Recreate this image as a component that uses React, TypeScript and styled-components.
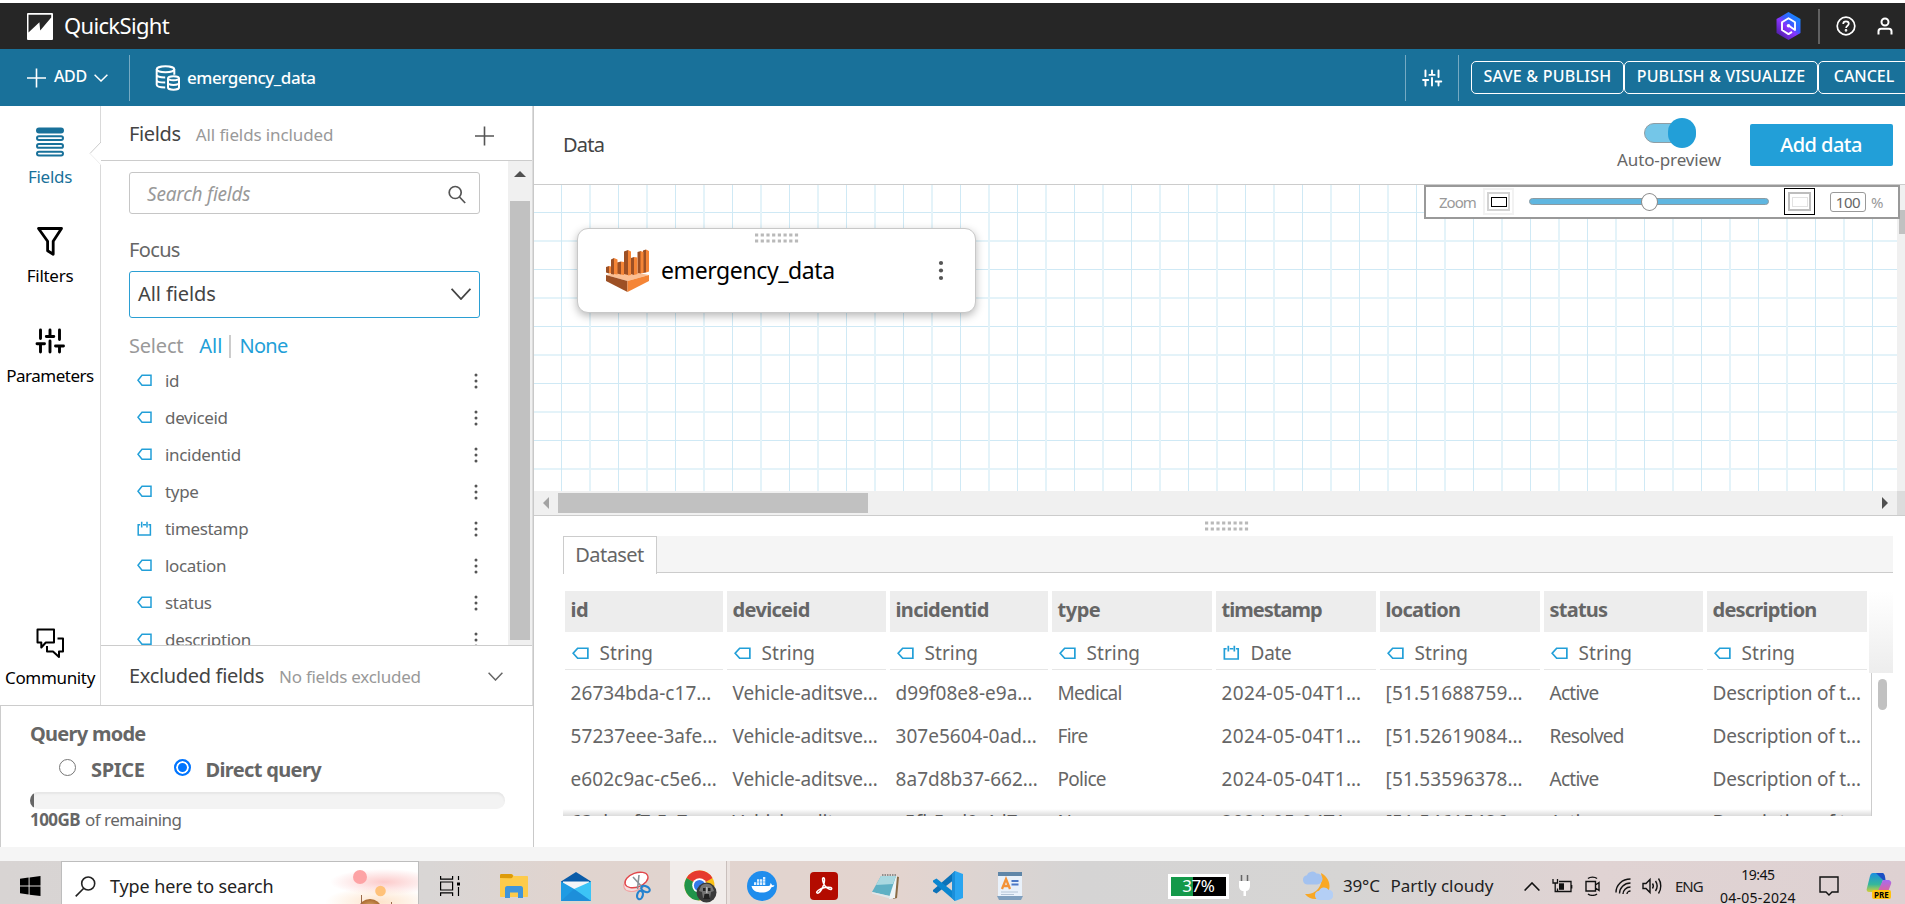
import React from 'react';
import styled, { createGlobalStyle, css } from 'styled-components';

const GlobalStyle = createGlobalStyle`
  *, *::before, *::after { box-sizing: border-box; }
  body { margin: 0; background: #fff; font-family: "Noto Sans", "Open Sans", sans-serif; }
  svg { display: block; flex: none; }
`;

const Text = styled.span<{ $size?: number; $weight?: number; $ls?: number; $color?: string; $italic?: boolean; $lh?: number }>`
  font-size: ${p => p.$size ?? 17}px;
  font-weight: ${p => p.$weight ?? 400};
  letter-spacing: ${p => p.$ls ?? 0}px;
  color: ${p => p.$color ?? '#666'};
  font-style: ${p => (p.$italic ? 'italic' : 'normal')};
  line-height: ${p => p.$lh ?? 24}px;
  white-space: nowrap;
`;

const Page = styled.div`
  display: flex;
  flex-direction: column;
  width: 1905px;
  height: 904px;
  overflow: hidden;
  background: #fff;
`;

/* ---------- top bars ---------- */

const Header = styled.header`
  display: flex;
  align-items: center;
  flex: none;
  height: 49px;
  padding: 0 12px 0 27px;
  border-top: 3px solid #fff;
  background: #262626;
`;
const Brand = styled.div`
  display: flex;
  align-items: center;
  gap: 11px;
  flex: 1;
`;
const BrandName = styled(Text)`
  margin-top: -2px;
`;
const HeaderRule = styled.div`
  width: 2px;
  height: 35px;
  margin: 0 16px 0 17px;
  background: #616161;
`;
const UserSlot = styled.div`
  margin-left: 21px;
`;

const Toolbar = styled.div`
  display: flex;
  align-items: center;
  flex: none;
  height: 57px;
  padding-left: 27px;
  background: #19719a;
`;
const AddMenu = styled.div`
  display: flex;
  align-items: center;
  width: 102px;
`;
const AddLabel = styled(Text)`
  margin: -3px 7px 0 7px;
`;
const ToolbarRule = styled.div`
  flex: none;
  width: 1px;
  height: 46px;
  background: #75aac3;
`;
const DatasetName = styled.div`
  display: flex;
  align-items: center;
  gap: 6px;
  flex: 1;
  padding-left: 25px;
`;
const SlidersSlot = styled.div`
  display: flex;
  justify-content: center;
  width: 52px;
`;
const Actions = styled.div`
  display: flex;
  width: 446px;
  padding-left: 12px;
  overflow: hidden;
`;
const ActionButton = styled.button<{ $width: number }>`
  display: flex;
  justify-content: center;
  flex: none;
  width: ${p => p.$width}px;
  height: 33px;
  padding: 2px 0 0 0;
  border: 1px solid #fff;
  border-radius: 5px;
  background: transparent;
  font-family: inherit;
`;

/* ---------- left side ---------- */

const Main = styled.main`
  display: flex;
  flex: none;
  height: 741px;
`;
const LeftSide = styled.aside`
  display: flex;
  flex-direction: column;
  width: 534px;
  border-right: 1px solid #c9c9c9;
`;
const Explorer = styled.div`
  display: flex;
  height: 599px;
`;
const Rail = styled.nav`
  position: relative;
  display: flex;
  flex-direction: column;
  width: 101px;
  border-right: 1px solid #d9d9d9;
`;
const RailItem = styled.div<{ $last?: boolean }>`
  display: flex;
  flex-direction: column;
  align-items: center;
  gap: 7px;
  height: ${p => (p.$last ? 98 : 99.4)}px;
  padding: 20px 0 0 0;
  ${p => p.$last && css`margin-top: auto;`}
`;
const Notch = styled.svg`
  position: absolute;
  left: 89px;
  top: 35px;
`;

const FieldsPanel = styled.section`
  display: flex;
  flex-direction: column;
  width: 432px;
  border-right: 1px solid #dcdcdc;
`;
const PanelHeader = styled.div`
  display: flex;
  align-items: center;
  height: 55px;
  padding: 2px 37px 0 28px;
  border-bottom: 1px solid #ccc;
`;
const PanelAction = styled.div`
  margin-top: 4px;
`;
const TitleGroup = styled.div`
  display: flex;
  align-items: baseline;
  gap: 15px;
  flex: 1;
`;
const ListArea = styled.div`
  display: flex;
  height: 484px;
  overflow: hidden;
`;
const ListContent = styled.div`
  flex: 1;
  height: 484px;
  padding: 11px 28px 0 28px;
`;
const SearchBox = styled.div`
  display: flex;
  align-items: center;
  justify-content: space-between;
  height: 42px;
  padding: 2px 13px 0 17px;
  border: 1px solid #c6c6c6;
  border-radius: 3px;
`;
const FocusLabel = styled.div`
  height: 57px;
  padding: 24px 0 0 0;
`;
const SelectBox = styled.div`
  display: flex;
  align-items: center;
  justify-content: space-between;
  height: 47px;
  padding: 0 8px 1px 8px;
  border: 1px solid #2b9fd3;
  border-radius: 3px;
`;
const SelectRow = styled.div`
  display: flex;
  align-items: center;
  height: 44px;
  padding: 12px 0 0 0;
`;
const SelectLink = styled(Text)<{ $ml?: number }>`
  margin-left: ${p => p.$ml ?? 0}px;
`;
const SelectRule = styled.span`
  width: 2px;
  height: 23px;
  margin: 0 8px 0 7px;
  background: #ccc;
`;
const FieldRow = styled.div`
  display: flex;
  align-items: center;
  height: 37px;
  padding: 0 1px 0 8px;
`;
const FieldName = styled(Text)`
  flex: 1;
  padding-left: 13px;
`;
const Scrollbar = styled.div`
  display: flex;
  flex-direction: column;
  align-items: center;
  width: 24px;
  height: 484px;
  padding-top: 10px;
  background: #f0f0f0;
`;
const ScrollThumb = styled.div`
  width: 20px;
  height: 439px;
  margin-top: 24px;
  background: #c1c1c1;
`;
const ExcludedBar = styled.div`
  display: flex;
  align-items: center;
  height: 60px;
  padding: 2px 29px 0 28px;
  border-top: 1px solid #ccc;
`;

const QueryPanel = styled.section`
  display: flex;
  flex-direction: column;
  align-items: flex-start;
  flex: 1;
  padding: 15px 28px 0 28px;
  border-top: 1px solid #ccc;
  border-left: 1px solid #ccc;
`;
const QueryTitle = styled(Text)`
  padding-left: 1px;
`;
const RadioRow = styled.div`
  display: flex;
  align-items: center;
  height: 36px;
  padding: 10px 0 0 30px;
`;
const Radio = styled.span<{ $on?: boolean }>`
  display: block;
  width: 17px;
  height: 17px;
  margin-top: -5px;
  border: ${p => (p.$on ? '2px solid #0075ff' : '1px solid #767676')};
  border-radius: 50%;
  background: ${p => (p.$on ? '#0075ff' : '#fff')};
  box-shadow: ${p => (p.$on ? 'inset 0 0 0 2px #fff' : 'none')};
`;
const RadioLabel = styled(Text)`
  margin: 0 29px 0 15px;
`;
const Meter = styled.div`
  width: 475px;
  height: 17px;
  margin: 9px 0 0 1px;
  overflow: hidden;
  border-radius: 9px;
  background: #f3f3f3;
  box-shadow: inset 0 2px 2px #e6e6e6;
`;
const MeterFill = styled.div`
  width: 4px;
  height: 17px;
  background: #666;
`;
const Capacity = styled.div`
  display: flex;
  gap: 5px;
  padding-left: 1px;
`;

/* ---------- data pane ---------- */

const DataPane = styled.section`
  display: flex;
  flex-direction: column;
  flex: 1;
  min-width: 0;
`;
const DataHeader = styled.div`
  display: flex;
  align-items: center;
  flex: none;
  height: 79px;
  padding: 0 12px 0 29px;
  border-bottom: 1px solid #ccc;
`;
const DataTitle = styled(Text)`
  flex: 1;
`;
const PreviewToggle = styled.div`
  display: flex;
  flex-direction: column;
  align-items: center;
  width: 104px;
  height: 78px;
  padding-top: 12px;
`;
const ToggleTrack = styled.div`
  display: flex;
  align-items: center;
  justify-content: flex-end;
  width: 52px;
  height: 20px;
  margin: 5px 0 5px 1px;
  border: 1px solid #8f9da4;
  border-radius: 10px;
  background: #74c6e8;
`;
const ToggleKnob = styled.div`
  flex: none;
  width: 28px;
  height: 30px;
  margin-right: -1px;
  border-radius: 14px;
  background: #229fd8;
`;
const AddData = styled.button`
  display: flex;
  align-items: center;
  justify-content: center;
  width: 143px;
  height: 42px;
  margin-left: 29px;
  padding: 0 1px 0 0;
  border: 0;
  border-radius: 2px;
  background: #229fd8;
  font-family: inherit;
`;

const CanvasRow = styled.div`
  display: flex;
  flex: none;
  height: 306px;
`;
const Canvas = styled.div`
  position: relative;
  flex: 1;
  background-color: #fff;
  background-image:
    linear-gradient(to right, #cfe9f5 1px, transparent 1px, transparent 28px, #e4f3f9 28px, #e4f3f9 30px, transparent 30px),
    linear-gradient(to bottom, #cfe9f5 1px, transparent 1px, transparent 28px, #e4f3f9 28px, #e4f3f9 30px, transparent 30px);
  background-size: 57px 57px;
  background-position: 27px 27px;
`;
const CanvasScroll = styled.div`
  width: 8px;
  padding: 25px 0 0 2px;
  background: #f0f0f0;
`;
const CanvasThumb = styled.div`
  height: 24px;
  background: #c1c1c1;
`;
const NodeCard = styled.div`
  position: absolute;
  left: 43px;
  top: 43px;
  display: flex;
  align-items: center;
  width: 399px;
  height: 85px;
  padding: 0 31px 0 28px;
  border: 1px solid #c8c8c8;
  border-radius: 11px;
  background: #fff;
  box-shadow: 0 3px 8px rgba(0, 0, 0, 0.28);
`;
const NodeGrip = styled.div`
  position: absolute;
  left: 177px;
  top: 4px;
`;
const NodeName = styled(Text)`
  flex: 1;
  margin-top: -2px;
  padding-left: 12px;
`;
const ZoomBar = styled.div`
  position: absolute;
  left: 890px;
  top: 0;
  z-index: 1;
  display: flex;
  align-items: center;
  width: 476px;
  height: 34px;
  padding: 0 13px 1px 13px;
  border: 2px solid #999;
  background: #fff;
`;
const ZoomLabel = styled(Text)`
  width: 44px;
`;
const ZoomPreset = styled.div<{ $outer?: boolean }>`
  display: flex;
  align-items: center;
  justify-content: center;
  flex: none;
  width: 31px;
  height: 27px;
  border: ${p => (p.$outer ? '1px solid #000' : '2px solid #f2f2f2')};
`;
const ZoomFrame = styled.div<{ $outer?: boolean }>`
  display: flex;
  align-items: center;
  justify-content: center;
  width: 23px;
  height: 19px;
  border: 2px solid ${p => (p.$outer ? '#bdbdbd' : '#d3d3d3')};
`;
const ZoomCore = styled.div<{ $outer?: boolean }>`
  width: 16px;
  height: 10px;
  border: ${p => (p.$outer ? '1px solid #e2e2e2' : '1.5px solid #000')};
`;
const ZoomTrack = styled.div`
  display: flex;
  align-items: center;
  justify-content: center;
  flex: none;
  width: 240px;
  height: 7px;
  margin: 0 15px;
  border: 1px solid #8a9ba3;
  border-radius: 4px;
  background: #5fb6e0;
`;
const ZoomThumb = styled.div`
  flex: none;
  width: 17px;
  height: 18px;
  border: 1px solid #888;
  border-radius: 50%;
  background: #fff;
`;
const ZoomInput = styled.div`
  display: flex;
  align-items: center;
  justify-content: center;
  flex: none;
  width: 36px;
  height: 20px;
  margin: 0 5px 0 15px;
  border: 1px solid #999;
  border-radius: 3px;
`;
const HScroll = styled.div`
  display: flex;
  align-items: center;
  flex: none;
  height: 24px;
  padding-left: 9px;
  background: #f0f0f0;
`;
const HThumb = styled.div`
  width: 310px;
  height: 20px;
  margin-left: 9px;
  background: #c1c1c1;
`;
const HEnd = styled.div`
  display: flex;
  flex: 1;
  justify-content: flex-end;
  padding-right: 9px;
`;
const HCorner = styled.div`
  width: 8px;
  height: 24px;
  background: #dcdcdc;
`;
const Splitter = styled.div`
  display: flex;
  flex: none;
  height: 21px;
  padding: 5px 0 0 671px;
  border-top: 1px solid #ccc;
`;
const Tabs = styled.div`
  display: flex;
  flex: none;
  height: 37px;
  margin: 0 12px 0 29px;
  border-bottom: 1px solid #ccc;
  background: #f5f5f5;
`;
const Tab = styled.div`
  display: flex;
  justify-content: center;
  width: 94px;
  height: 38px;
  padding: 6px 1px 0 0;
  border: 1px solid #ccc;
  border-bottom: 0;
  background: #fff;
`;
const TableWrap = styled.div`
  display: flex;
  height: 225px;
  margin: 18px 12px 0 29px;
`;
const Table = styled.div`
  width: 1308px;
  height: 225px;
  overflow: hidden;
  position: relative;
`;
const GridRow = styled.div`
  display: grid;
  grid-template-columns: 158px 159px 158px 160px 160px 160px 159px 160px;
  column-gap: 4px;
  padding-left: 2px;
`;
const HeadCell = styled.div`
  height: 41px;
  padding: 7px 0 0 5.6px;
  background: #ededed;
`;
const TypeCell = styled.div`
  display: flex;
  align-items: center;
  gap: 10.600px;
  height: 38px;
  padding: 5px 0 0 7px;
  border-bottom: 1px solid #e6e6e6;
`;
const BodyCell = styled.div`
  height: 43px;
  padding: 11px 0 0 5.6px;
  overflow: hidden;
  line-height: 24px;
`;
const Body = styled.div`
  height: 146px;
`;
const BottomShade = styled.div`
  position: absolute;
  left: 0;
  bottom: 0;
  width: 1308px;
  height: 7px;
  background: linear-gradient(rgba(0, 0, 0, 0), rgba(0, 0, 0, 0.14));
`;
const TableSide = styled.div`
  display: flex;
  flex-direction: column;
  width: 24px;
  margin-left: -2px;
`;
const SideShade = styled.div`
  height: 82px;
  background: linear-gradient(#fff, #ededed);
`;
const SideScroll = styled.div`
  flex: 1;
  margin-left: 2px;
  padding: 6px 0 0 6px;
  border-left: 1px solid #ccc;
`;
const SideThumb = styled.div`
  width: 9px;
  height: 31px;
  border-radius: 5px;
  background: #c1c1c1;
`;

/* ---------- desktop taskbar ---------- */

const Gap = styled.div`
  flex: none;
  height: 14px;
  background: #f5f5f5;
`;
const Taskbar = styled.footer`
  display: flex;
  align-items: center;
  flex: none;
  height: 50px;
  background: linear-gradient(90deg, #d8d4d3 0, #d9d6d5 430px, #e0d4cf 560px, #e3d4cf 900px, #d5d4d4 1080px, #d6d5d4 1350px, #e0d3d3 1600px, #ded1d2 1905px);
`;
const StartSlot = styled.div`
  display: flex;
  justify-content: center;
  width: 61px;
`;
const SearchField = styled.div`
  display: flex;
  align-items: center;
  width: 358px;
  height: 50px;
  padding-left: 13px;
  border: 1px solid #bdbdbd;
  border-bottom: 0;
  background: #fff;
  overflow: hidden;
`;
const SearchText = styled(Text)`
  flex: 1;
  margin-top: -2px;
  padding-left: 14px;
`;
const AppSlot = styled.div<{ $active?: boolean; $shift?: number }>`
  display: flex;
  align-items: center;
  justify-content: center;
  width: 62.2px;
  height: 50px;
  padding-left: ${p => p.$shift ?? 1}px;
  ${p => p.$active && css`
    background: linear-gradient(90deg, transparent 2px, #f1ecea 2px, #f1ecea 58px, #c9bfbc 58px, #c9bfbc 59px, #ebe3e0 59px);
  `}
`;
const Tray = styled.div<{ $ml: number; $w: number }>`
  display: flex;
  flex-direction: column;
  align-items: center;
  flex: none;
  width: ${p => p.$w}px;
  margin-left: ${p => p.$ml}px;
`;
const Battery = styled.div`
  display: flex;
  align-items: center;
  justify-content: center;
  width: 61px;
  height: 25px;
  border: 3px solid #fff;
  background: linear-gradient(90deg, #14994a 22px, #000 22px);
`;

/* ---------- icons ---------- */

const Chevron = ({ w, h, color, stroke = 1.5 }: { w: number; h: number; color: string; stroke?: number }) => (
  <svg width={w} height={h} viewBox={`0 0 ${w} ${h}`} fill="none" stroke={color} strokeWidth={stroke}>
    <path d={`M.6 .8 L${w / 2} ${h - 1} L${w - 0.6} .8`} />
  </svg>
);
const Plus = ({ color }: { color: string }) => (
  <svg width="20" height="20" viewBox="0 0 20 20" stroke={color} strokeWidth="1.6"><path d="M9.500.5v19M0 10h19" /></svg>
);
const Sliders = ({ size, color, stroke }: { size: number; color: string; stroke: number }) => (
  <svg width={size} height={size} viewBox="0 0 32 32" fill="none" stroke={color} strokeWidth={stroke} strokeLinecap="round">
    <path d="M6.5 5v8.5M3 18.800h7.500M6.5 19v8M16 5v5M12.300 11.500h7.500M16 16v11M25.500 5v9.500M21.500 21h8M25.500 21v6" />
  </svg>
);
const FieldsIcon = () => (
  <svg width="30" height="32" viewBox="0 0 30 32" fill="none" stroke="#19719a" strokeWidth="2">
    <rect x="2" y="2.500" width="26" height="4" rx="2" fill="#19719a" />
    <rect x="2" y="10.200" width="26" height="3.800" rx="1.900" />
    <rect x="2" y="18" width="26" height="3.800" rx="1.900" />
    <rect x="2" y="25.700" width="26" height="3.800" rx="1.900" />
  </svg>
);
const FunnelIcon = () => (
  <svg width="28" height="32" viewBox="0 0 28 32" fill="none" stroke="#000" strokeWidth="2.800" strokeLinejoin="round">
    <path d="M2.500 3.500h23l-8.300 12.800v13l-5.600-3.500v-9.500z" />
  </svg>
);
const ChatIcon = () => (
  <svg width="30" height="32" viewBox="0 0 30 32" fill="none" stroke="#000" strokeWidth="2" strokeLinejoin="round">
    <path d="M2.500 2.500h16.500v13h-8.200l-4.500 5v-5h-3.800z" />
    <path d="M22.500 11.500h5.500v13h-4v5.500l-6-5.500h-6v-5.500" />
  </svg>
);
const TagIcon = ({ w = 15 }: { w?: number }) => (
  <svg width={w} height="13" viewBox="0 0 15 13" preserveAspectRatio="none" fill="none" stroke="#229fd8" strokeWidth="1.500">
    <path d="M1 6.300 5 1.300h9v10H5z" />
  </svg>
);
const DateIcon = ({ w = 15 }: { w?: number }) => (
  <svg width={w} height="16" viewBox="0 0 15 16" preserveAspectRatio="none" fill="none" stroke="#229fd8" strokeWidth="1.500">
    <path d="M3.200 3.800H1.200v10.200h12.200V3.800h-2M6 3.800h3M4.700.8v5.800M10 .8v5.800" />
  </svg>
);
const Kebab = ({ r = 1.5, gap = 6, color = '#555' }: { r?: number; gap?: number; color?: string }) => (
  <svg width="6" height={gap * 2 + 6} viewBox={`0 0 6 ${gap * 2 + 6}`} fill={color}>
    {[0, 1, 2].map(i => <circle key={i} cx="3" cy={3 + i * gap} r={r} />)}
  </svg>
);
const Grip = () => (
  <svg width="44" height="11" viewBox="0 0 44 11" fill="#b9b9b9">
    {Array.from({ length: 16 }, (_, i) => (
      <rect key={i} x={(i % 8) * 5.7} y={i < 8 ? 0.5 : 6.5} width="3.200" height="3" />
    ))}
  </svg>
);
const LogoIcon = () => (
  <svg width="26" height="27" viewBox="0 0 26 27">
    <rect width="26" height="27" rx="1" fill="#fff" />
    <path d="M1.500 1.800h22.700v2.800L13.200 17.500l-.8-8.200L1.500 19.500z" fill="#262626" />
  </svg>
);
const AssistantIcon = () => (
  <svg width="25" height="28" viewBox="0 0 25 28">
    <defs>
      <linearGradient id="hex" x1="1" y1="0" x2="0.200" y2="1">
        <stop offset="0" stopColor="#00a2ff" /><stop offset=".45" stopColor="#3a5bff" /><stop offset=".6" stopColor="#8a34ff" /><stop offset="1" stopColor="#4a1b9e" />
      </linearGradient>
    </defs>
    <path d="M12.500 0l12 7v14l-12 7-12-7V7z" fill="url(#hex)" />
    <path d="M12.500 13.500l6.500 4.500V10.300l-6.500-4.100-6.500 4.100v7.700l6.500 4.100 3.500-2.200" fill="none" stroke="#fff" strokeWidth="1.900" strokeLinejoin="round" />
    <circle cx="12.500" cy="13.700" r="1.800" fill="#fff" />
  </svg>
);
const HelpIcon = () => (
  <svg width="20" height="20" viewBox="0 0 20 20" fill="none" stroke="#fff" strokeWidth="1.700">
    <circle cx="10" cy="10" r="8.800" />
    <path d="M7.200 8c0-1.700 1.200-2.600 2.800-2.600s2.800.9 2.800 2.400c0 2-2.700 2-2.700 4.200" />
    <circle cx="10" cy="14.300" r=".5" fill="#fff" />
  </svg>
);
const UserIcon = () => (
  <svg width="16" height="18" viewBox="0 0 16 18" fill="none" stroke="#fff" strokeWidth="2">
    <circle cx="8" cy="5" r="3.500" />
    <path d="M1.500 17.500v-3.200c0-1.500 1-2.500 2.500-2.500h8c1.500 0 2.500 1 2.500 2.500v3.200" />
  </svg>
);
const DatabaseIcon = () => (
  <svg width="26" height="26" viewBox="0 0 26 26" fill="none" stroke="#fff" strokeWidth="2">
    <ellipse cx="10.500" cy="4.300" rx="8.800" ry="3" />
    <path d="M1.700 4.300v15.500c0 1.500 3 2.700 8.500 2.700M19.300 4.300v5.500M1.700 9.800c0 1.400 3 2.600 8.500 2.600M1.700 15c0 1.400 3 2.500 8.500 2.500" />
    <ellipse cx="18.500" cy="13.300" rx="5.500" ry="2" />
    <path d="M13 13.300v9.200c0 1.200 2.500 2.200 5.500 2.200s5.500-1 5.500-2.200v-9.200M13 17.800c0 1.200 2.500 2.100 5.500 2.100s5.500-.9 5.500-2.100" />
  </svg>
);
const SearchIcon = () => (
  <svg width="18" height="19" viewBox="0 0 18 19" fill="none" stroke="#555" strokeWidth="1.700">
    <circle cx="7.200" cy="7.500" r="6" /><path d="M11.500 12l5.700 6" />
  </svg>
);
const SourceIcon = () => (
  <svg width="43" height="43" viewBox="0 0 43 43">
    <path d="M0 26l21.500-4L43 26l-21.500 6z" fill="#fbbf93" />
    <path d="M0 26l21.500 6v11L0 32z" fill="#9d5025" />
    <path d="M43 26l-21.500 6v11L43 32z" fill="#f58536" />
    <path d="M0 18l3-1v7.500l-3-1zM5 10.500l3-1.500v16.500l-3-.5zM11 13.500l4-1v13l-4-1zM18 2.500l4-1.500v25l-4-1zM25 9l3-1v18l-3-1zM31.500 3l3.500-1v22.500l-3.500-.5zM37 1.500l3-1v23l-3 .5z" fill="#9d5025" />
    <path d="M3 17l2 .5v7H3zM8 9l3.500 1.500v15L8 25zM15 12.500l3 .5v13l-3-.5zM22 1l3 1.500v23.500l-3 .5zM28 8l3.500.5v16.500l-3.500 1zM34.500 2l3 1v21l-3 .5zM40 .5l3 1.500v20.500l-3 1z" fill="#f58536" />
  </svg>
);

const WindowsIcon = () => (
  <svg width="21" height="20" viewBox="0 0 21 20"><path d="M0 2.800l8.600-1.200v8H0zM9.600 1.400L20.500 0v9.500H9.600zM0 10.600h8.600v8L0 17.300zM9.600 10.600h10.900V20L9.600 18.700z" /></svg>
);
const TaskSearchIcon = () => (
  <svg width="21" height="21" viewBox="0 0 21 21" fill="none" stroke="#222" strokeWidth="1.600"><circle cx="13.200" cy="7.500" r="6.500" /><path d="M8.800 12.300L.7 20.400" /></svg>
);
const SearchArt = () => (
  <svg width="94" height="49" viewBox="0 0 94 49">
    <defs>
      <radialGradient id="glowA"><stop offset="0" stopColor="#fbb9b9" stopOpacity=".75" /><stop offset="1" stopColor="#fbb9b9" stopOpacity="0" /></radialGradient>
      <radialGradient id="glowB"><stop offset="0" stopColor="#fde0c4" stopOpacity=".9" /><stop offset="1" stopColor="#fde0c4" stopOpacity="0" /></radialGradient>
      <radialGradient id="nut"><stop offset="0" stopColor="#e8b877" /><stop offset="1" stopColor="#a9682f" /></radialGradient>
    </defs>
    <ellipse cx="60" cy="20" rx="54" ry="13" fill="url(#glowA)" />
    <ellipse cx="55" cy="40" rx="54" ry="15" fill="url(#glowB)" />
    <circle cx="36" cy="15" r="7" fill="#fda3a5" />
    <circle cx="56.500" cy="29" r="5.300" fill="#ffc27a" />
    <ellipse cx="46" cy="46" rx="11" ry="9" fill="url(#nut)" />
    <ellipse cx="60" cy="47" rx="7" ry="5" fill="#b3733a" />
    <path d="M37.500 33v12M67.500 40v8" stroke="#9b6a4a" />
  </svg>
);
const TaskViewIcon = () => (
  <svg width="21" height="20" viewBox="0 0 21 20" fill="none" stroke="#000" strokeWidth="1.200">
    <path d="M.6 0v3.200h12V0M.6 20v-3.200h12V20M.6 6h12v8H.6zM18.500 0v4M18.500 11v9" /><path d="M17 6.500h3v3h-3z" fill="#000" stroke="none" />
  </svg>
);
const FolderIcon = () => (
  <svg width="28" height="24" viewBox="0 0 28 24">
    <path d="M0 1.500C0 .7.500 0 1.500 0H12l2 2H27c.6 0 1 .5 1 1v19c0 .6-.4 1-1 1H1c-.6 0-1-.4-1-1z" fill="#fdcb4b" />
    <path d="M0 4V1.500C0 .7.500 0 1.500 0H11c1 0 2 1 2 2s-1 2.200-2 2.200z" fill="#dd9b0a" />
    <path d="M5 24V14.500c0-1.500.8-2.500 2.300-2.500h13.400c1.500 0 2.300 1 2.300 2.500V24h-5v-5.500h-8V24z" fill="#3f95db" />
  </svg>
);
const MailIcon = () => (
  <svg width="30" height="29" viewBox="0 0 30 29">
    <path d="M0 9.500L15 0l15 9.500v3H0z" fill="#0a5ba8" /><path d="M2 9.500h26v9H2z" fill="#f3f5f8" />
    <path d="M0 9.500l15 8.500 15-8.500V29H0z" fill="#1e9be3" /><path d="M30 9.500V29L13 16.900z" fill="#3cc4f6" />
    <path d="M0 29h30L13 17z" fill="#1c8ad6" opacity=".7" />
  </svg>
);
const SnipIcon = () => (
  <svg width="30" height="30" viewBox="0 0 30 30" fill="none">
    <ellipse cx="12" cy="13" rx="10.500" ry="7" transform="rotate(-20 12 13)" fill="#f4dede" stroke="#f1a3a3" strokeWidth="1.200" />
    <ellipse cx="14.500" cy="9" rx="12" ry="7" transform="rotate(-20 14.500 9)" fill="#fff" stroke="#e2474b" strokeWidth="1.300" />
    <path d="M11 6l10 11M17 4l-1.500 14" stroke="#8b9298" strokeWidth="1.600" />
    <ellipse cx="23.500" cy="18" rx="4.500" ry="2.800" transform="rotate(25 23.500 18)" stroke="#2583cf" strokeWidth="2.200" />
    <ellipse cx="18" cy="24" rx="2.800" ry="4.300" transform="rotate(15 18 24)" stroke="#2583cf" strokeWidth="2.200" />
  </svg>
);
const ChromeIcon = () => (
  <svg width="33" height="33" viewBox="0 0 33 33">
    <circle cx="15.500" cy="15.500" r="15" fill="#fbc116" />
    <path d="M15.500 15.500L2.500 8A15 15 0 0 1 28.500 8z" fill="#e63b2e" />
    <path d="M15.500 15.500L2.500 8a15 15 0 0 0 13 22.500z" fill="#20944a" />
    <circle cx="15.500" cy="15.500" r="7.300" fill="#fff" /><circle cx="15.500" cy="15.500" r="5.600" fill="#3379ea" />
    <circle cx="22.500" cy="22.500" r="10" fill="#3a3a3a" />
    <path d="M17 16c3-3 8-3 11 0l2 5-3 1-1 6h-7l-1-6-3-1z" fill="#757575" />
    <path d="M19 18h2.500v3H19zM24 18h2.500v3H24zM20.500 24h4.500l1 5h-6.500z" fill="#222" />
    <path d="M22 17h1.500v6H22z" fill="#b5b5b5" />
  </svg>
);
const DockerIcon = () => (
  <svg width="30" height="30" viewBox="0 0 30 30">
    <circle cx="15" cy="15" r="15" fill="#1f8ded" />
    <path d="M4.500 15h17c1.500 0 2-1 1.700-2.800 1.200.4 1.700 1.200 1.900 2 1-.1 1.700 0 2.400.4-.6 1.200-1.500 1.600-3 1.700-1.700 3.700-4.500 5.200-9.500 5.200-6 0-9.500-2-10.500-6.500z" fill="#fff" />
    <path d="M7 11.300h2.300v2.700H7zM10 11.300h2.300v2.700H10zM13 11.300h2.300v2.700H13zM16 11.300h2.300v2.700H16zM10 8.300h2.300v2.500H10zM13 8.300h2.300v2.500H13zM16 8.300h2.300v2.500H16zM16 6h2.300v2H16z" fill="#dcefff" />
  </svg>
);
const AcrobatIcon = () => (
  <svg width="28" height="28" viewBox="0 0 28 28">
    <rect width="28" height="28" rx="4" fill="#b30b00" />
    <path d="M13 6c2-1 2 4 0 8.500-1.500 4-4.500 7.500-6 6.500s2.500-4.500 8-5.500 7.500.5 6.500 1.700c-1 1-4.500-.7-6.500-3.200S12 6.500 13 6z" fill="none" stroke="#fff" strokeWidth="1.500" />
  </svg>
);
const NotepadIcon = () => (
  <svg width="28" height="27" viewBox="0 0 28 27">
    <path d="M22 3l5 1-2 21-4 1z" fill="#8a6b45" /><path d="M20 4l5-1-2 22-6 1z" fill="#eef4f6" />
    <path d="M9 3h15l-6.500 20L0 19z" fill="#5fb0c4" /><path d="M9 3h15l-3 8L4 12z" fill="#a9d8e0" /><path d="M0 19l17.500 4 .5 2.500L0 20.500z" fill="#dfe7ea" />
    <path d="M10 2h14" stroke="#777" strokeWidth="1.500" strokeDasharray="1.500 1" />
  </svg>
);
const VsCodeIcon = () => (
  <svg width="30" height="30" viewBox="0 0 30 30">
    <path d="M22 0v8L3.500 22.500 0 20.500V19z" fill="#0c72b8" /><path d="M22 30v-8L3.500 7.500 0 9.500V11z" fill="#0a86d0" />
    <path d="M22 0l8 3v24l-8 3z" fill="#2aa5f0" /><path d="M22 0v30l-3-3V3z" fill="#1b8fda" />
  </svg>
);
const WordpadIcon = () => (
  <svg width="26" height="28" viewBox="0 0 26 28">
    <path d="M1 0h24v26H1z" fill="#e9f1fa" /><path d="M1 0h24v4H1z" fill="#5f86a8" /><path d="M0 24h26l-2 4H2z" fill="#7f9fbe" />
    <path d="M5 17l4-10 4 10M6.500 14h5" fill="none" stroke="#f39237" strokeWidth="2.300" />
    <path d="M14.500 9h7M14.500 12.500h7" stroke="#4d79c5" strokeWidth="2" /><path d="M4 20h17M4 22.500h13" stroke="#b3c4d6" />
  </svg>
);
const PlugIcon = () => (
  <svg width="12" height="22" viewBox="0 0 12 22" fill="#fff"><path d="M2.500 0v6M8.500 0v6" stroke="#666" strokeWidth="1.500" /><path d="M0 6h11v5c0 3-2 5-4 5v5H4.500v-5C2 16 0 14 0 11z" /></svg>
);
const WeatherIcon = () => (
  <svg width="31" height="31" viewBox="0 0 31 31">
    <path d="M19 2c12 6 12 24-4 26-5 .5-9-1-12-5 10 1 19-7 16-21z" fill="#f9a825" />
    <path d="M5 13.500a4.700 4.700 0 0 1 0-9.300A5.600 5.600 0 0 1 14.500 2.500a5.500 5.500 0 0 1 1 11z" fill="#a3c2f0" /><path d="M17 29a4.700 4.700 0 0 1 0-9.300 5.600 5.600 0 0 1 9.500-1 5.200 5.200 0 0 1 .5 10.300z" fill="#b4cff5" />
  </svg>
);
const Line = ({ w, h, d, sw = 1.4 }: { w: number; h: number; d: string; sw?: number }) => (
  <svg width={w} height={h} viewBox={`0 0 ${w} ${h}`} fill="none" stroke="#111" strokeWidth={sw}><path d={d} /></svg>
);
const ChargeIcon = () => (
  <svg width="21" height="16" viewBox="0 0 21 16" fill="none" stroke="#111" strokeWidth="1.300">
    <path d="M7 3.500h12v10H5.500v-3M19.700 7v3.500M1 1v4h4.500V1M3.200 5v8.500h2" />
    <path d="M7 5.300h5v6.500H7z" fill="#111" stroke="none" />
  </svg>
);
const CopilotIcon = () => (
  <svg width="26" height="26" viewBox="0 0 26 26">
    <defs>
      <linearGradient id="cpA" x1="0" y1="0" x2="0" y2="1"><stop offset="0" stopColor="#1b8fe0" /><stop offset=".6" stopColor="#35b79b" /><stop offset="1" stopColor="#d3cf3a" /></linearGradient>
      <linearGradient id="cpB" x1="0" y1="0" x2="0" y2="1"><stop offset="0" stopColor="#a66cf0" /><stop offset="1" stopColor="#f0607e" /></linearGradient>
    </defs>
    <path d="M7 0h9c2 0 3 2 2 4l-4 12c-1 2-2 3-4 3H3c-2 0-3-2-2-4L4 3c.5-2 1.500-3 3-3z" fill="url(#cpA)" />
    <path d="M17 7h5c2 0 4 2 3 4l-3 8c-.5 2-2 3-4 3h-8z" fill="url(#cpB)" />
    <path d="M10 0h6c2 0 3 2 3.500 7H17z" fill="#1c4fc4" />
  </svg>
);
const CopilotWrap = styled.div`
  position: relative;
`;
const PreBadge = styled.span`
  position: absolute;
  left: 6px;
  top: 17px;
  width: 19px;
  height: 9px;
  border-radius: 2px;
  background: #ffc20e;
  color: #000;
  font-size: 8px;
  font-weight: 700;
  line-height: 9px;
  text-align: center;
`;

/* ---------- data ---------- */

const fieldNames = ['id', 'deviceid', 'incidentid', 'type', 'timestamp', 'location', 'status', 'description'];
const headSpacing = [-0.5, -0.68, -0.72, -0.5, -0.99, -0.8, -0.8, -0.79];
const cellSpacing = [0.03, -0.17, 0.01, -0.75, 0.31, 0.15, -0.75, -0.23];
const rows = [
  ['26734bda-c17…', 'Vehicle-aditsve…', 'd99f08e8-e9a…', 'Medical', '2024-05-04T1…', '[51.51688759…', 'Active', 'Description of t…'],
  ['57237eee-3afe…', 'Vehicle-aditsve…', '307e5604-0ad…', 'Fire', '2024-05-04T1…', '[51.52619084…', 'Resolved', 'Description of t…'],
  ['e602c9ac-c5e6…', 'Vehicle-aditsve…', '8a7d8b37-662…', 'Police', '2024-05-04T1…', '[51.53596378…', 'Active', 'Description of t…'],
  ['63ebccf7-5c7…', 'Vehicle-aditsve…', 'c5fb5ed9-4d7…', 'None', '2024-05-04T1…', '[51.54615426…', 'Active', 'Description of t…'],
];

export default function App() {
  return (
    <Page>
      <GlobalStyle />
      <Header>
        <Brand>
          <LogoIcon />
          <BrandName $size={22} $ls={-0.66} $color="#fff" $lh={26}>QuickSight</BrandName>
        </Brand>
        <AssistantIcon />
        <HeaderRule />
        <HelpIcon />
        <UserSlot><UserIcon /></UserSlot>
      </Header>
      <Toolbar>
        <AddMenu>
          <Plus color="#fff" />
          <AddLabel $size={16} $weight={500} $color="#fff" $ls={-0.4}>ADD</AddLabel>
          <Chevron w={14} h={8} color="#fff" />
        </AddMenu>
        <ToolbarRule />
        <DatasetName>
          <DatabaseIcon />
          <Text $size={17} $weight={500} $ls={-0.45} $color="#fff">emergency_data</Text>
        </DatasetName>
        <ToolbarRule />
        <SlidersSlot><Sliders size={22} color="#fff" stroke={2.8} /></SlidersSlot>
        <ToolbarRule />
        <Actions>
          <ActionButton $width={153}><Text $size={16} $weight={500} $ls={0.24} $color="#fff">SAVE &amp; PUBLISH</Text></ActionButton>
          <ActionButton $width={194}><Text $size={16} $weight={500} $ls={0.14} $color="#fff">PUBLISH &amp; VISUALIZE</Text></ActionButton>
          <ActionButton $width={92}><Text $size={16} $weight={500} $ls={-0.05} $color="#fff">CANCEL</Text></ActionButton>
        </Actions>
      </Toolbar>

      <Main>
        <LeftSide>
          <Explorer>
            <Rail>
              <RailItem><FieldsIcon /><Text $ls={-0.3} $color="#19719a">Fields</Text></RailItem>
              <RailItem><FunnelIcon /><Text $ls={-0.28} $color="#000">Filters</Text></RailItem>
              <RailItem><Sliders size={32} color="#000" stroke={2.9} /><Text $ls={-0.49} $color="#000">Parameters</Text></RailItem>
              <RailItem $last><ChatIcon /><Text $ls={-0.34} $color="#000">Community</Text></RailItem>
              <Notch width="13" height="25" viewBox="0 0 13 25">
                <path d="M12 1L1 12.500 12 24z" fill="#fff" />
                <path d="M12 1L1 12.500" stroke="#ccc" /><path d="M1 12.500L12 24" stroke="#eee" />
              </Notch>
            </Rail>
            <FieldsPanel>
              <PanelHeader>
                <TitleGroup>
                  <Text $size={20} $ls={-0.35} $color="#444">Fields</Text>
                  <Text $ls={-0.11} $color="#999">All fields included</Text>
                </TitleGroup>
                <PanelAction><Plus color="#555" /></PanelAction>
              </PanelHeader>
              <ListArea>
                <ListContent>
                  <SearchBox>
                    <Text $size={19} $ls={-0.22} $color="#999" $italic>Search fields</Text>
                    <SearchIcon />
                  </SearchBox>
                  <FocusLabel><Text $size={20} $ls={-0.65}>Focus</Text></FocusLabel>
                  <SelectBox>
                    <Text $size={20} $ls={-0.1} $color="#444">All fields</Text>
                    <Chevron w={20} h={12} color="#444" stroke={1.8} />
                  </SelectBox>
                  <SelectRow>
                    <Text $size={20} $ls={-0.2} $color="#999">Select</Text>
                    <SelectLink $ml={16} $size={20} $ls={0} $color="#229fd8">All</SelectLink>
                    <SelectRule />
                    <SelectLink $size={20} $ls={-0.7} $color="#229fd8">None</SelectLink>
                  </SelectRow>
                  {fieldNames.map(name => (
                    <FieldRow key={name}>
                      {name === 'timestamp' ? <DateIcon /> : <TagIcon />}
                      <FieldName $ls={-0.32}>{name}</FieldName>
                      <Kebab />
                    </FieldRow>
                  ))}
                </ListContent>
                <Scrollbar>
                  <svg width="12" height="6" viewBox="0 0 12 6"><path d="M0 6L6 0l6 6z" fill="#505050" /></svg>
                  <ScrollThumb />
                </Scrollbar>
              </ListArea>
              <ExcludedBar>
                <TitleGroup>
                  <Text $size={20} $ls={-0.32} $color="#444">Excluded fields</Text>
                  <Text $ls={-0.26} $color="#999">No fields excluded</Text>
                </TitleGroup>
                <Chevron w={15} h={9} color="#666" />
              </ExcludedBar>
            </FieldsPanel>
          </Explorer>
          <QueryPanel>
            <QueryTitle $size={20} $weight={700} $ls={-0.74} $lh={26}>Query mode</QueryTitle>
            <RadioRow>
              <Radio />
              <RadioLabel $size={20} $weight={700} $ls={-0.35}>SPICE</RadioLabel>
              <Radio $on />
              <RadioLabel $size={20} $weight={700} $ls={-0.65}>Direct query</RadioLabel>
            </RadioRow>
            <Meter><MeterFill /></Meter>
            <Capacity>
              <Text $weight={700} $ls={-0.56} $lh={21}>100GB</Text>
              <Text $ls={-0.5} $lh={21}>of remaining</Text>
            </Capacity>
          </QueryPanel>
        </LeftSide>

        <DataPane>
          <DataHeader>
            <DataTitle $size={20} $ls={-0.8} $color="#444">Data</DataTitle>
            <PreviewToggle>
              <ToggleTrack><ToggleKnob /></ToggleTrack>
              <Text $ls={-0.11}>Auto-preview</Text>
            </PreviewToggle>
            <AddData><Text $size={20} $weight={500} $ls={-0.55} $color="#fff">Add data</Text></AddData>
          </DataHeader>
          <CanvasRow>
            <Canvas>
              <NodeCard>
                <NodeGrip><Grip /></NodeGrip>
                <SourceIcon />
                <NodeName $size={23} $ls={-0.4} $color="#000">emergency_data</NodeName>
                <Kebab r={2.1} gap={7.5} />
              </NodeCard>
              <ZoomBar>
                <ZoomLabel $size={15} $ls={-1} $color="#999">Zoom</ZoomLabel>
                <ZoomPreset><ZoomFrame><ZoomCore /></ZoomFrame></ZoomPreset>
                <ZoomTrack><ZoomThumb /></ZoomTrack>
                <ZoomPreset $outer><ZoomFrame $outer><ZoomCore $outer /></ZoomFrame></ZoomPreset>
                <ZoomInput><Text $size={15} $ls={-0.4}>100</Text></ZoomInput>
                <Text $size={15} $color="#999">%</Text>
              </ZoomBar>
            </Canvas>
            <CanvasScroll><CanvasThumb /></CanvasScroll>
          </CanvasRow>
          <HScroll>
            <svg width="6" height="12" viewBox="0 0 6 12"><path d="M6 0L0 6l6 6z" fill="#a3a3a3" /></svg>
            <HThumb />
            <HEnd><svg width="6" height="12" viewBox="0 0 6 12"><path d="M0 0l6 6-6 6z" fill="#505050" /></svg></HEnd>
            <HCorner />
          </HScroll>
          <Splitter><Grip /></Splitter>
          <Tabs>
            <Tab><Text $size={20} $ls={-0.55}>Dataset</Text></Tab>
          </Tabs>
          <TableWrap>
            <Table>
              <GridRow>
                {fieldNames.map((name, i) => (
                  <HeadCell key={name}><Text $size={20} $weight={700} $ls={headSpacing[i]}>{name}</Text></HeadCell>
                ))}
              </GridRow>
              <GridRow>
                {fieldNames.map(name => (
                  <TypeCell key={name}>
                    {name === 'timestamp' ? <DateIcon w={17} /> : <TagIcon w={17} />}
                    <Text $size={19} $ls={name === 'timestamp' ? -0.3 : 0}>{name === 'timestamp' ? 'Date' : 'String'}</Text>
                  </TypeCell>
                ))}
              </GridRow>
              <Body>
                {rows.map((row, r) => (
                  <GridRow key={r}>
                    {row.map((cell, i) => (
                      <BodyCell key={i}><Text $size={19} $ls={cellSpacing[i]}>{cell}</Text></BodyCell>
                    ))}
                  </GridRow>
                ))}
              </Body>
              <BottomShade />
            </Table>
            <TableSide>
              <SideShade />
              <SideScroll><SideThumb /></SideScroll>
            </TableSide>
          </TableWrap>
        </DataPane>
      </Main>

      <Gap />
      <Taskbar>
        <StartSlot><WindowsIcon /></StartSlot>
        <SearchField>
          <TaskSearchIcon />
          <SearchText $size={18} $ls={-0.11} $color="#222">Type here to search</SearchText>
          <SearchArt />
        </SearchField>
        <AppSlot $shift={0}><TaskViewIcon /></AppSlot>
        <AppSlot $shift={3}><FolderIcon /></AppSlot>
        <AppSlot $shift={3}><MailIcon /></AppSlot>
        <AppSlot><SnipIcon /></AppSlot>
        <AppSlot $active $shift={4}><ChromeIcon /></AppSlot>
        <AppSlot><DockerIcon /></AppSlot>
        <AppSlot><AcrobatIcon /></AppSlot>
        <AppSlot><NotepadIcon /></AppSlot>
        <AppSlot><VsCodeIcon /></AppSlot>
        <AppSlot $shift={0}><WordpadIcon /></AppSlot>
        <Tray $ml={127} $w={61}><Battery><Text $size={17} $ls={-0.4} $color="#fff">37%</Text></Battery></Tray>
        <Tray $ml={10} $w={12}><PlugIcon /></Tray>
        <Tray $ml={52} $w={30}><WeatherIcon /></Tray>
        <Tray $ml={10} $w={37}><Text $ls={-0.2} $color="#222">39°C</Text></Tray>
        <Tray $ml={11} $w={102}><Text $color="#222">Partly cloudy</Text></Tray>
        <Tray $ml={31} $w={16}><Line w={16} h={9} d="M.6 8.500L8 1l7.400 7.500" sw={1.6} /></Tray>
        <Tray $ml={12} $w={21}><ChargeIcon /></Tray>
        <Tray $ml={12} $w={16}><Line w={16} h={20} d="M3 2.500c2-1.800 7-1.800 9 0M3 18c2 1.800 7 1.800 9 0M1 5.500h9.500v9.500H1zM10.500 9l3.500-2.500v8l-3.500-2.500" /></Tray>
        <Tray $ml={14} $w={16}><Line w={16} h={17} d="M1 14.500C1 7 7 1 15.500 1M4.500 15.500C4.500 10 9 5 15.500 5M8 16c0-3.500 3-7 7.500-7M12 16c0-1.500 1.500-3 3.500-3" /></Tray>
        <Tray $ml={11} $w={20}><Line w={20} h={18} d="M1 6.500h3L8 2.500v13l-4-4H1zM10.500 6.500c1 1.500 1 3.500 0 5M13.500 4c2 3 2 7 0 10M16.500 1.500c3 4 3 11 0 15" /></Tray>
        <Tray $ml={13} $w={28}><Text $size={15} $ls={-0.9} $color="#222">ENG</Text></Tray>
        <Tray $ml={17} $w={76}>
          <Text $size={14} $ls={-0.5} $color="#111" $lh={23}>19:45</Text>
          <Text $size={14} $ls={0.25} $color="#111" $lh={23}>04-05-2024</Text>
        </Tray>
        <Tray $ml={23} $w={20}><Line w={20} h={20} d="M1 1h18v15h-6l-3 3-3-3H1z" /></Tray>
        <Tray $ml={27} $w={26}><CopilotWrap><CopilotIcon /><PreBadge>PRE</PreBadge></CopilotWrap></Tray>
      </Taskbar>
    </Page>
  );
}
